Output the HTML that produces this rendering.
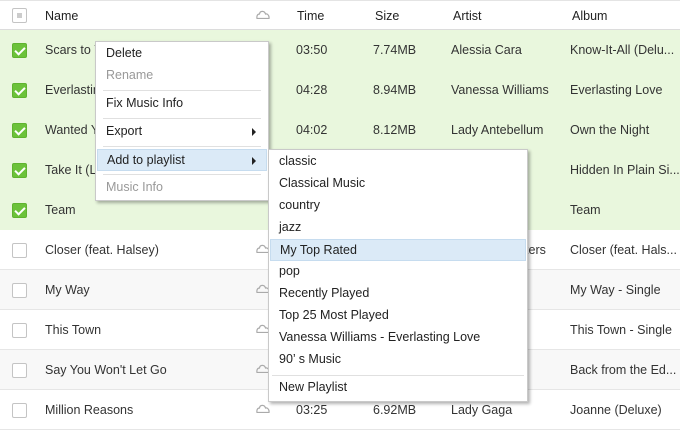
<!DOCTYPE html>
<html><head><meta charset="utf-8"><style>
*{margin:0;padding:0;box-sizing:border-box}
body{width:680px;height:431px;overflow:hidden;background:#fff;font-family:"Liberation Sans","DejaVu Sans",sans-serif;font-size:12.5px;color:#333;position:relative}
.row{position:absolute;left:0;width:680px;height:40px;border-bottom:1px solid #e6e6e6}
.row span{position:absolute;top:0;line-height:40px;white-space:nowrap}
.hdr{position:absolute;left:0;top:0;width:680px;height:30px;border-top:1px solid #e4e4e4;border-bottom:1px solid #dcdcdc;background:#fff}
.hdr span{position:absolute;line-height:30px;color:#222}
.g{background:#e9f7dd;border-bottom:none}
.alt{background:#f8f8f8}
.cb{position:absolute;left:12px;top:13px;width:15px;height:15px;border:1px solid #c4c4c4;border-radius:2px;background:#fff}
.cb.on{background:#6cc23a;border-color:#5fb32f}
.cb.on:after{content:"";position:absolute;left:4px;top:1px;width:4px;height:8px;border:solid #fff;border-width:0 2px 2px 0;transform:rotate(45deg)}
.cloud{position:absolute;left:256px;top:14px}
.menu{position:absolute;background:#fff;border:1px solid #c9c9c9;box-shadow:2px 2px 3px rgba(0,0,0,.3)}
.mi{position:absolute;left:2px;right:2px;height:21px;line-height:21px;padding-left:8px;color:#222;white-space:nowrap}
.dis{color:#999}
.hl{background:#dbeaf7;border:1px solid #c6dcef}
.sep{position:absolute;left:7px;right:7px;height:1px;background:#e0e0e0}
.arr{position:absolute;right:10px;top:7px;width:0;height:0;border-left:4px solid #222;border-top:4px solid transparent;border-bottom:4px solid transparent}
</style></head><body>
<svg width="0" height="0" style="position:absolute"><defs><symbol id="c" viewBox="0 0 14 9"><path d="M1 8.5H13C13.5 5 11 3.5 9.5 4 8.5 0.5 4 0.5 3.5 4 1.5 4 0.5 6 1 8.5Z" fill="none" stroke="#aaa" stroke-width="1.2"/></symbol></defs></svg>
<div class="hdr">
<div class="cb" style="top:7px;left:12px"><div style="position:absolute;left:4px;top:4px;width:5px;height:5px;background:#ccc"></div></div>
<span style="left:45px">Name</span>
<svg style="position:absolute;left:256px;top:9px" width="14" height="9"><use href="#c"/></svg>
<span style="left:297px">Time</span><span style="left:375px">Size</span><span style="left:453px">Artist</span><span style="left:572px">Album</span>
</div>

<div class="row g" style="top:30px"><div class="cb on"></div><span style="left:45px">Scars to Your Beautiful</span><span style="left:296px">03:50</span><span style="left:373px">7.74MB</span><span style="left:451px">Alessia Cara</span><span style="left:570px">Know-It-All (Delu...</span></div>
<div class="row g" style="top:70px"><div class="cb on"></div><span style="left:45px">Everlasting Love</span><span style="left:296px">04:28</span><span style="left:373px">8.94MB</span><span style="left:451px">Vanessa Williams</span><span style="left:570px">Everlasting Love</span></div>
<div class="row g" style="top:110px"><div class="cb on"></div><span style="left:45px">Wanted You</span><span style="left:296px">04:02</span><span style="left:373px">8.12MB</span><span style="left:451px">Lady Antebellum</span><span style="left:570px">Own the Night</span></div>
<div class="row g" style="top:150px"><div class="cb on"></div><span style="left:45px">Take It (Live)</span><span style="left:570px">Hidden In Plain Si...</span></div>
<div class="row g" style="top:190px"><div class="cb on"></div><span style="left:45px">Team</span><span style="left:570px">Team</span></div>
<div class="row" style="top:230px"><div class="cb"></div><span style="left:45px">Closer (feat. Halsey)</span><svg class="cloud" width="14" height="9"><use href="#c"/></svg><span style="left:466px">Chainsmokers</span><span style="left:570px">Closer (feat. Hals...</span></div>
<div class="row alt" style="top:270px"><div class="cb"></div><span style="left:45px">My Way</span><svg class="cloud" width="14" height="9"><use href="#c"/></svg><span style="left:570px">My Way - Single</span></div>
<div class="row" style="top:310px"><div class="cb"></div><span style="left:45px">This Town</span><svg class="cloud" width="14" height="9"><use href="#c"/></svg><span style="left:570px">This Town - Single</span></div>
<div class="row alt" style="top:350px"><div class="cb"></div><span style="left:45px">Say You Won't Let Go</span><svg class="cloud" width="14" height="9"><use href="#c"/></svg><span style="left:570px">Back from the Ed...</span></div>
<div class="row" style="top:390px"><div class="cb"></div><span style="left:45px">Million Reasons</span>
<svg class="cloud" width="14" height="9"><use href="#c"/></svg>
<span style="left:296px">03:25</span><span style="left:373px">6.92MB</span><span style="left:451px">Lady Gaga</span><span style="left:570px">Joanne (Deluxe)</span></div>

<div class="menu" style="left:95px;top:41px;width:174px;height:160px">
<div class="mi" style="top:1px">Delete</div>
<div class="mi dis" style="top:23px">Rename</div>
<div class="sep" style="top:48px"></div>
<div class="mi" style="top:51px">Fix Music Info</div>
<div class="sep" style="top:76px"></div>
<div class="mi" style="top:79px">Export<div class="arr"></div></div>
<div class="sep" style="top:104px"></div>
<div class="mi hl" style="top:107px;height:22px;left:1px;right:1px;padding-left:9px">Add to playlist<div class="arr"></div></div>
<div class="sep" style="top:132px"></div>
<div class="mi dis" style="top:135px">Music Info</div>
</div>

<div class="menu" style="left:268px;top:149px;width:260px;height:253px">
<div class="mi" style="top:1px">classic</div>
<div class="mi" style="top:23px">Classical Music</div>
<div class="mi" style="top:45px">country</div>
<div class="mi" style="top:67px">jazz</div>
<div class="mi hl" style="top:89px;height:22px;left:1px;right:1px;padding-left:9px">My Top Rated</div>
<div class="mi" style="top:111px">pop</div>
<div class="mi" style="top:133px">Recently Played</div>
<div class="mi" style="top:155px">Top 25 Most Played</div>
<div class="mi" style="top:177px">Vanessa Williams - Everlasting Love</div>
<div class="mi" style="top:199px">90’ s Music</div>
<div class="sep" style="top:225px;left:3px;right:3px"></div>
<div class="mi" style="top:227px">New Playlist</div>
</div>
</body></html>
